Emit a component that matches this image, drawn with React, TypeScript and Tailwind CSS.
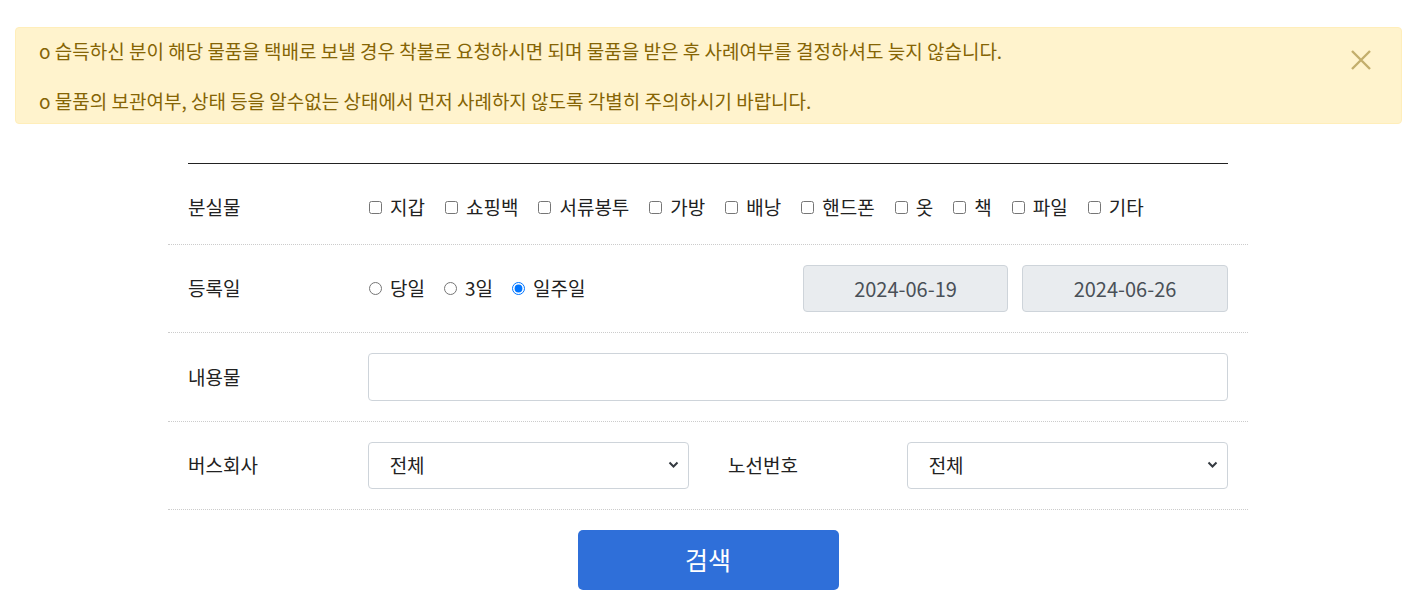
import { useState } from "react";

const items = ["지갑", "쇼핑백", "서류봉투", "가방", "배낭", "핸드폰", "옷", "책", "파일", "기타"];
const periods = ["당일", "3일", "일주일"];

export default function App() {
  const [period, setPeriod] = useState("일주일");

  return (
    <div className="min-h-[601px] bg-white font-['Noto_Sans_CJK_KR','Noto_Sans',sans-serif] text-[#222]">
      <div className="pt-[27px]">
        <div className="ml-[15px] mr-[19px] flex h-[97px] items-center justify-between rounded-[4px] border border-[#ffeeba] bg-[#fff3cd] pl-[23px] pr-[29px] text-[19px] text-[#856404]">
          <div className="flex flex-col gap-[25px] leading-[25px]">
            <p>o 습득하신 분이 해당 물품을 택배로 보낼 경우 착불로 요청하시면 되며 물품을 받은 후 사례여부를 결정하셔도 늦지 않습니다.</p>
            <p>o 물품의 보관여부, 상태 등을 알수없는 상태에서 먼저 사례하지 않도록 각별히 주의하시기 바랍니다.</p>
          </div>
          <button className="-mt-[32px] text-[#c3ae6c]" aria-label="닫기">
            <svg width="22" height="22" viewBox="0 0 22 22" fill="none" stroke="currentColor" strokeWidth="2.4">
              <path d="M2 2L20 20M20 2L2 20" />
            </svg>
          </button>
        </div>
      </div>

      <div className="ml-[168px] mt-[39px] w-[1080px]">
        <div className="mx-5 border-t border-[#222]" />

        <div className="flex h-[81px] items-center border-b border-dotted border-[#ccc] px-5 pt-[7px] text-[19px]">
          <div className="w-[180px]">분실물</div>
          <div className="flex items-center">
            {items.map((it) => (
              <label key={it} className="mr-[19px] flex items-center">
                <input type="checkbox" className="m-0 ml-[1px] h-[13px] w-[13px]" />
                <span className="ml-[8px]">{it}</span>
              </label>
            ))}
          </div>
        </div>

        <div className="flex h-[88px] items-center border-b border-dotted border-[#ccc] px-5 text-[19px]">
          <div className="w-[180px]">등록일</div>
          <div className="flex flex-1 items-center">
            {periods.map((p) => (
              <label key={p} className="mr-[18px] flex items-center">
                <input
                  type="radio"
                  name="period"
                  checked={period === p}
                  onChange={() => setPeriod(p)}
                  className="m-0 ml-[1px] h-[13px] w-[13px]"
                />
                <span className="ml-[8px]">{p}</span>
              </label>
            ))}
          </div>
          <div className="flex gap-[14px] text-[20px]">
            <div className="flex h-[47px] w-[205px] items-center justify-center rounded-[4px] border border-[#ced4da] bg-[#e9ecef] text-[#495057]">2024-06-19</div>
            <div className="flex h-[47px] w-[206px] items-center justify-center rounded-[4px] border border-[#ced4da] bg-[#e9ecef] text-[#495057]">2024-06-26</div>
          </div>
        </div>

        <div className="flex h-[89px] items-center border-b border-dotted border-[#ccc] px-5 text-[19px]">
          <div className="w-[180px]">내용물</div>
          <input type="text" className="h-[48px] flex-1 rounded-[4px] border border-[#ced4da] px-3 outline-none" />
        </div>

        <div className="flex h-[88px] items-center border-b border-dotted border-[#ccc] px-5 text-[19px]">
          <div className="w-[180px]">버스회사</div>
          <Select />
          <div className="ml-[39px] w-[179px]">노선번호</div>
          <Select />
        </div>

        <div className="flex justify-center pt-[20px]">
          <button className="h-[60px] w-[261px] rounded-[5px] bg-[#2f6fd9] text-[25px] text-white">검색</button>
        </div>
      </div>
    </div>
  );
}

function Select() {
  return (
    <div className="relative h-[47px] w-[322px]">
      <select className="h-full w-full appearance-none rounded-[4px] border border-[#ced4da] bg-white pl-[21px] text-[19px] text-[#222] outline-none">
        <option>전체</option>
      </select>
      <svg className="pointer-events-none absolute right-[10px] top-[19px]" width="11" height="8" viewBox="0 0 11 8" fill="none" stroke="#343a40" strokeWidth="2">
        <path d="M1.5 1.5L5.5 5.5L9.5 1.5" />
      </svg>
    </div>
  );
}
